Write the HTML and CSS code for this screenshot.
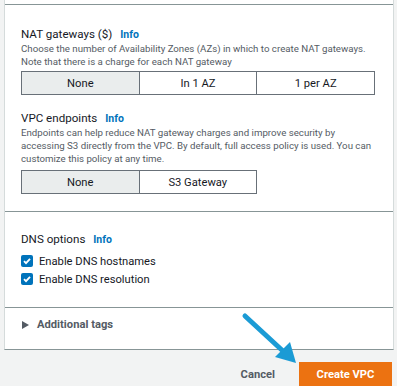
FILE: index.html
```html
<!DOCTYPE html>
<html lang="en">
<head>
  <meta charset="UTF-8">
  <meta name="viewport" content="width=device-width, initial-scale=1.0">
  <title>Create VPC</title>
  <link rel="stylesheet" href="styles.css">
</head>
<body>
  <div class="panel">
    <section class="section first">
      <div class="field">
        <div class="label">NAT gateways ($) <a href="#" class="info">Info</a></div>
        <p class="desc">Choose the number of Availability Zones (AZs) in which to create NAT gateways.<br>Note that there is a charge for each NAT gateway</p>
        <div class="segmented three">
          <button class="seg active">None</button>
          <button class="seg">In 1 AZ</button>
          <button class="seg">1 per AZ</button>
        </div>
      </div>
      <div class="field endpoints">
        <div class="label">VPC endpoints <a href="#" class="info">Info</a></div>
        <p class="desc">Endpoints can help reduce NAT gateway charges and improve security by<br>accessing S3 directly from the VPC. By default, full access policy is used. You can<br>customize this policy at any time.</p>
        <div class="segmented two">
          <button class="seg active">None</button>
          <button class="seg">S3 Gateway</button>
        </div>
      </div>
    </section>
    <section class="section dns">
      <div class="label">DNS options <a href="#" class="info">Info</a></div>
      <label class="check"><span class="box"><svg width="10" height="10" viewBox="0 0 10 10"><path d="M2 5.2l2 2 4-4.4" fill="none" stroke="#fff" stroke-width="1.8"/></svg></span>Enable DNS hostnames</label>
      <label class="check"><span class="box"><svg width="10" height="10" viewBox="0 0 10 10"><path d="M2 5.2l2 2 4-4.4" fill="none" stroke="#fff" stroke-width="1.8"/></svg></span>Enable DNS resolution</label>
    </section>
    <section class="section tags">
      <span class="caret"></span>Additional tags
    </section>
  </div>
  <div class="actions">
    <button class="btn-link">Cancel</button>
    <button class="btn-primary">Create VPC</button>
  </div>
  <svg class="pointer" width="397" height="386" viewBox="0 0 397 386">
    <line x1="245" y1="316" x2="284" y2="352" stroke="#1b9bd5" stroke-width="5" stroke-linecap="round"/>
    <polygon points="296,363 275,357 290,342" fill="#1b9bd5"/>
  </svg>
</body>
</html>
```

FILE: styles.css
```css
* { box-sizing: border-box; margin: 0; padding: 0; }
body {
  font-family: Roboto, "Liberation Sans", sans-serif;
  background: #f2f3f3;
  color: #16191f;
  height: 386px;
  overflow: hidden;
  position: relative;
}
.panel {
  width: 390px;
  margin-left: 4px;
  background: #fff;
  border-left: 1px solid #d5dbdb;
  border-right: 1px solid #d5dbdb;
  border-bottom: 1px solid #879596;
  padding-top: 4px;
}
.section {
  border-top: 1px solid #879596;
  padding: 0 18px 0 16px;
}
.section.first { padding-top: 22px; padding-bottom: 17px; }
.label {
  font-size: 11.6px;
  line-height: 14px;
  white-space: nowrap;
}
.info {
  color: #0073bb;
  font-weight: bold;
  font-size: 10.5px;
  text-decoration: none;
  margin-left: 5px;
}
.desc {
  font-size: 9.7px;
  line-height: 13px;
  color: #545b64;
  white-space: nowrap;
}
.segmented {
  display: flex;
  margin-top: 3px;
  height: 24px;
}
.segmented.two { width: 236px; margin-top: 5px; }
.seg {
  flex: 1;
  font-family: inherit;
  font-size: 11.2px;
  color: #16191f;
  background: #fff;
  border: 1px solid #687078;
  border-left: none;
}
.seg:first-child { border-left: 1px solid #687078; }
.seg.active { background: #eaeded; }
.endpoints { margin-top: 16px; }
.section.dns { padding-top: 20px; padding-bottom: 19px; }
.check {
  display: flex;
  align-items: center;
  height: 18px;
  font-size: 11.2px;
}
.dns .label { margin-bottom: 5px; }
.box {
  width: 12px;
  height: 12px;
  border-radius: 2px;
  background: #0073bb;
  margin-right: 6px;
  display: flex;
  align-items: center;
  justify-content: center;
}
.section.tags {
  padding-top: 10px;
  padding-bottom: 17px;
  font-size: 11.2px;
  line-height: 14px;
  font-weight: bold;
  color: #545b64;
  display: flex;
  align-items: center;
}
.caret {
  width: 0;
  height: 0;
  border-top: 4px solid transparent;
  border-bottom: 4px solid transparent;
  border-left: 7px solid #545b64;
  margin: 0 8px 0 1px;
}
.actions {
  display: flex;
  justify-content: flex-end;
  align-items: center;
  gap: 10px;
  padding: 12px 5px 0 0;
}
.btn-link {
  background: none;
  border: none;
  font-family: inherit;
  font-size: 11.2px;
  font-weight: bold;
  color: #545b64;
  padding: 0 14px;
}
.btn-primary {
  background: #ec7211;
  border: none;
  color: #fff;
  font-family: inherit;
  font-size: 11.2px;
  font-weight: bold;
  height: 24px;
  width: 93px;
}
.pointer {
  position: absolute;
  top: 0;
  left: 0;
  pointer-events: none;
}
```
